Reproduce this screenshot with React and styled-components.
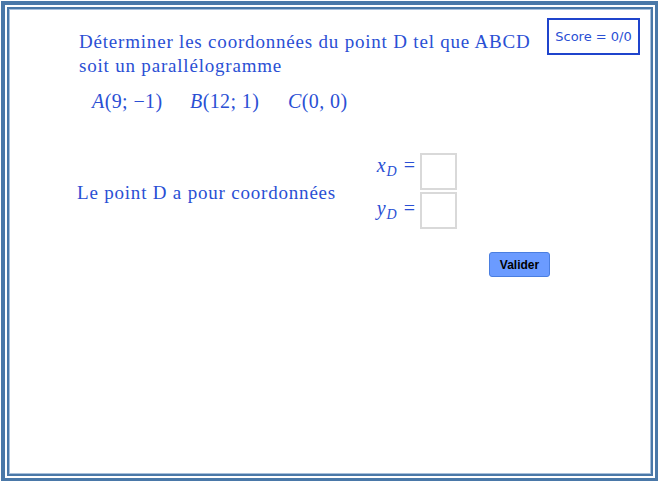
import React, { useState } from "react";
import styled, { createGlobalStyle } from "styled-components";

const GlobalStyle = createGlobalStyle`
  html, body {
    margin: 0;
    padding: 0;
    background: #ffffff;
  }
  * {
    box-sizing: border-box;
  }
`;

const Frame = styled.div`
  margin: 1px 0 0 1px;
  width: 657px;
  height: 480px;
  border: 3px solid #4a78a8;
  border-left-width: 4px;
  border-top-width: 4px;
  padding: 2px;
  background: #ffffff;
`;

const Inner = styled.div`
  height: 100%;
  border: 2px solid #4a78a8;
  box-shadow: inset 1px 1px 0 #a7bfdb, inset -1px -1px 0 #a7bfdb;
  display: flex;
  flex-direction: column;
  font-family: "Liberation Serif", "DejaVu Serif", serif;
  color: #2a4fd4;
`;

const Header = styled.div`
  display: flex;
  justify-content: space-between;
  align-items: flex-start;
  padding: 9px 11px 0 70px;
`;

const Question = styled.div`
  padding-top: 12px;
  font-size: 19px;
  letter-spacing: 0.8px;
  line-height: 24px;
  width: 466px;
`;

const Points = styled.div`
  display: flex;
  padding: 11px 0 0 13px;
  font-size: 20px;
  line-height: 24px;
`;

const Point = styled.span`
  width: 98px;
  letter-spacing: 0.4px;
`;

const Var = styled.i`
  font-style: italic;
`;

const ScoreBox = styled.div`
  flex-shrink: 0;
  border: 2px solid #1f44cc;
  width: 93px;
  height: 37px;
  display: flex;
  align-items: center;
  justify-content: center;
  font-family: "DejaVu Sans", "Liberation Sans", sans-serif;
  font-size: 13px;
  color: #2a4fd4;
`;

const AnswerRow = styled.div`
  display: flex;
  align-items: center;
  padding: 40px 0 0 68px;
`;

const AnswerLabel = styled.div`
  font-size: 19px;
  letter-spacing: 0.8px;
  line-height: 24px;
  width: 288px;
  padding-top: 3px;
`;

const Fields = styled.div`
  display: grid;
  grid-template-columns: 55px 37px;
  row-gap: 2px;
  align-items: center;
`;

const FieldLabel = styled.div`
  font-size: 20px;
  text-align: right;
  padding-right: 5px;
  white-space: nowrap;
  line-height: 24px;
  position: relative;
  top: ${(p) => (p.$low ? "1px" : "-3px")};
`;

const Sub = styled.sub`
  font-size: 14px;
  font-style: italic;
  vertical-align: -4px;
  margin-right: 7px;
  margin-left: 1px;
`;

const Box = styled.input`
  width: 37px;
  height: 37px;
  border: 2px solid #d9d9d9;
  background: #ffffff;
  outline: none;
  font-size: 16px;
  padding: 2px;
`;

const ButtonRow = styled.div`
  display: flex;
  padding: 23px 0 0 480px;
`;

const Button = styled.button`
  width: 61px;
  height: 25px;
  background: #6b9bff;
  border: 1px solid #4a7ee0;
  border-radius: 3px;
  font-family: "Liberation Sans", Arial, sans-serif;
  font-weight: bold;
  font-size: 12px;
  color: #000000;
  padding: 0;
  cursor: pointer;
`;

export default function App() {
  const [x, setX] = useState("");
  const [y, setY] = useState("");
  return (
    <>
      <GlobalStyle />
      <Frame>
        <Inner>
          <Header>
            <div>
              <Question>
                Déterminer les coordonnées du point D tel que ABCD
                <br />
                soit un parallélogramme
              </Question>
              <Points>
                <Point>
                  <Var>A</Var>(9; −1)
                </Point>
                <Point>
                  <Var>B</Var>(12; 1)
                </Point>
                <Point>
                  <Var>C</Var>(0<Var>,</Var> 0)
                </Point>
              </Points>
            </div>
            <ScoreBox>Score = 0/0</ScoreBox>
          </Header>
          <AnswerRow>
            <AnswerLabel>Le point D a pour coordonnées</AnswerLabel>
            <Fields>
              <FieldLabel>
                <Var>x</Var>
                <Sub>D</Sub>=
              </FieldLabel>
              <Box value={x} onChange={(e) => setX(e.target.value)} />
              <FieldLabel $low>
                <Var>y</Var>
                <Sub>D</Sub>=
              </FieldLabel>
              <Box value={y} onChange={(e) => setY(e.target.value)} />
            </Fields>
          </AnswerRow>
          <ButtonRow>
            <Button>Valider</Button>
          </ButtonRow>
        </Inner>
      </Frame>
    </>
  );
}
